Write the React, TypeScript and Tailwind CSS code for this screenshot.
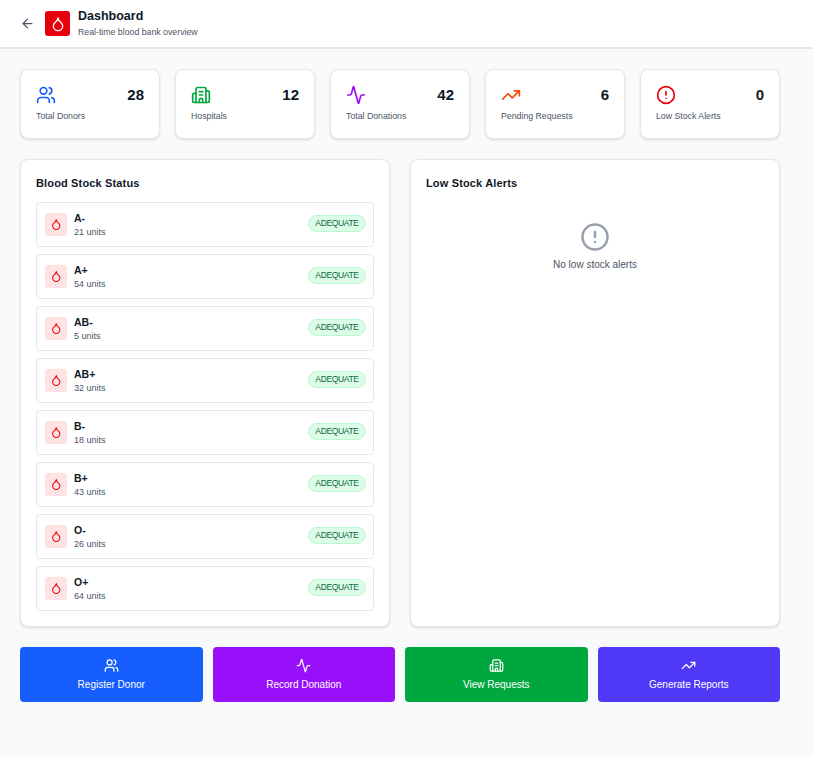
import { Activity, AlertCircle, ArrowLeft, Building2, Droplet, TrendingUp, Users } from "lucide-react"

const stats = [
	{ icon: Users, value: 28, label: "Total Donors", color: "text-[#155dfc]" },
	{ icon: Building2, value: 12, label: "Hospitals", color: "text-[#00a63e]" },
	{ icon: Activity, value: 42, label: "Total Donations", color: "text-[#9810fa]" },
	{ icon: TrendingUp, value: 6, label: "Pending Requests", color: "text-[#f54900]" },
	{ icon: AlertCircle, value: 0, label: "Low Stock Alerts", color: "text-[#e7000b]" },
]

const stock = [
	{ type: "A-", units: 21 },
	{ type: "A+", units: 54 },
	{ type: "AB-", units: 5 },
	{ type: "AB+", units: 32 },
	{ type: "B-", units: 18 },
	{ type: "B+", units: 43 },
	{ type: "O-", units: 26 },
	{ type: "O+", units: 64 },
]

const actions = [
	{ icon: Users, label: "Register Donor", color: "bg-[#155dfc]" },
	{ icon: Activity, label: "Record Donation", color: "bg-[#9810fa]" },
	{ icon: Building2, label: "View Requests", color: "bg-[#00a63e]" },
	{ icon: TrendingUp, label: "Generate Reports", color: "bg-[#4f39f6]" },
]

export default function App() {
	return (
		<div className="min-h-[757px] bg-[#f9fafb] font-['Liberation_Sans',Arial,sans-serif]">
			<header className="flex h-[49px] items-center border-b-2 border-[#e5e7eb] bg-white pl-[20px]">
				<ArrowLeft className="h-[15px] w-[15px] text-[#4a5565]" />
				<div className="ml-[10px] flex h-[25px] w-[25px] items-center justify-center rounded-[3px] bg-[#e7000b]">
					<Droplet className="h-[16px] w-[16px] text-white" />
				</div>
				<div className="ml-[8px] -translate-y-[1px]">
					<h1 className="text-[12.5px] leading-[16px] font-bold text-[#101828]">Dashboard</h1>
					<p className="mt-[2px] text-[8.75px] leading-[12px] text-[#4a5565]">Real-time blood bank overview</p>
				</div>
			</header>
			<main className="w-[780px] pt-[20px] pl-[20px]">
				<div className="grid grid-cols-5 gap-[15px]">
					{stats.map((s) => (
						<div key={s.label} className="h-[70px] rounded-[8px] border border-[#e5e7eb] bg-white px-[15px] pt-[15px] shadow-sm">
							<div className="flex items-center justify-between">
								<s.icon className={`h-[20px] w-[20px] ${s.color}`} />
								<span className="text-[15px] leading-[20px] font-bold text-[#101828]">{s.value}</span>
							</div>
							<p className="mt-[5px] text-[8.75px] leading-[12px] text-[#4a5565]">{s.label}</p>
						</div>
					))}
				</div>
				<div className="mt-[20px] grid grid-cols-2 gap-[20px]">
					<section className="h-[468px] rounded-[8px] border border-[#e5e7eb] bg-white px-[15px] pt-[15px] shadow-sm">
						<h2 className="text-[11px] leading-[16px] font-bold tracking-[0.15px] text-[#101828]">Blood Stock Status</h2>
						<div className="mt-[11px] flex flex-col gap-[7px]">
							{stock.map((b) => (
								<div key={b.type} className="flex h-[45px] items-center justify-between rounded-[4px] border border-[#e5e7eb] pr-[7px] pl-[8px]">
									<div className="flex items-center gap-[7px]">
										<div className="flex h-[23px] w-[22px] items-center justify-center rounded-[3px] bg-[#ffe2e2]">
											<Droplet className="h-[12.5px] w-[12.5px] text-[#e7000b]" />
										</div>
										<div className="pt-[2px]">
											<p className="text-[10.5px] leading-[13px] font-bold text-[#101828]">{b.type}</p>
											<p className="mt-[1px] text-[9px] leading-[13px] text-[#4a5565]">{b.units} units</p>
										</div>
									</div>
									<span className="mb-[2px] flex h-[17px] w-[58px] items-center justify-center rounded-full border border-[#b9f8cf] bg-[#dcfce7] text-[8.5px] tracking-[-0.35px] text-[#0b6a45]">ADEQUATE</span>
								</div>
							))}
						</div>
					</section>
					<section className="h-[468px] rounded-[8px] border border-[#e5e7eb] bg-white px-[15px] pt-[15px] shadow-sm">
						<h2 className="text-[11px] leading-[16px] font-bold tracking-[0.15px] text-[#101828]">Low Stock Alerts</h2>
						<div className="mt-[31px] flex flex-col items-center">
							<AlertCircle className="h-[30px] w-[30px] text-[#99a1af]" />
							<p className="mt-[6px] text-[10px] leading-[14px] text-[#4a5565]">No low stock alerts</p>
						</div>
					</section>
				</div>
				<div className="mt-[20px] grid grid-cols-4 gap-[10px]">
					{actions.map((a) => (
						<button key={a.label} className={`flex h-[55px] flex-col items-center justify-center gap-[6px] rounded-[4px] text-white ${a.color}`}>
							<a.icon className="h-[15px] w-[15px]" />
							<span className="text-[10px] leading-[12px]">{a.label}</span>
						</button>
					))}
				</div>
			</main>
		</div>
	)
}
